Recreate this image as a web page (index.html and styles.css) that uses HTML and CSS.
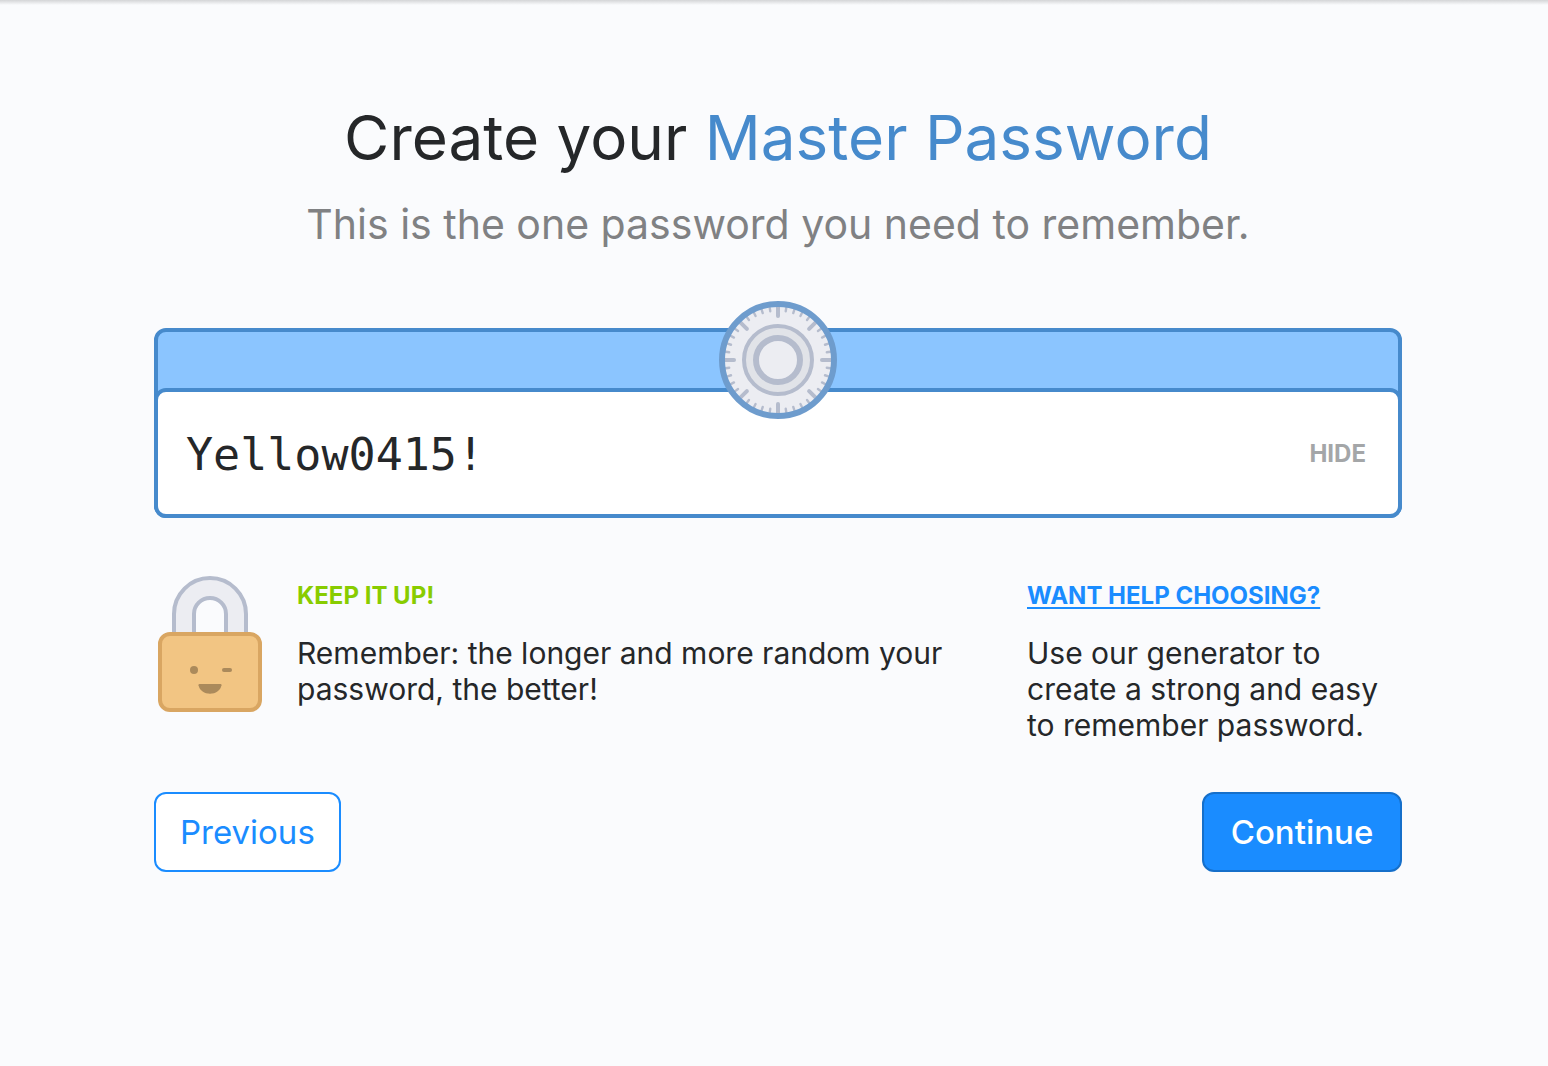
FILE: index.html
```html
<!DOCTYPE html>
<html lang="en">
<head>
<meta charset="utf-8">
<meta name="viewport" content="width=device-width, initial-scale=1">
<title>Create your Master Password</title>
<link rel="stylesheet" href="styles.css">
</head>
<body>
<main class="page">
  <header class="intro">
    <h1 class="title">Create your <span class="accent">Master Password</span></h1>
    <p class="subtitle">This is the one password you need to remember.</p>
  </header>

  <form class="form">
    <div class="vault">
      <div class="vault-bar">
        <svg class="dial" viewBox="0 0 118 118" aria-hidden="true">
          <defs>
            <g id="minor-ticks" stroke="#b5bccd" stroke-width="2.400" stroke-linecap="round">
              <path d="M59 6v3.600" transform="rotate(9 59 59)"/>
              <path d="M59 6v3.600" transform="rotate(18 59 59)"/>
              <path d="M59 6v3.600" transform="rotate(27 59 59)"/>
              <path d="M59 6v3.600" transform="rotate(36 59 59)"/>
            </g>
            <g id="eighth">
              <path d="M59 5v10" stroke="#b5bccd" stroke-width="4" stroke-linecap="round"/>
              <use href="#minor-ticks"/>
            </g>
          </defs>
          <circle cx="59" cy="59" r="56" fill="#ecedf2"/>
          <use href="#eighth"/>
          <use href="#eighth" transform="rotate(45 59 59)"/>
          <use href="#eighth" transform="rotate(90 59 59)"/>
          <use href="#eighth" transform="rotate(135 59 59)"/>
          <use href="#eighth" transform="rotate(180 59 59)"/>
          <use href="#eighth" transform="rotate(225 59 59)"/>
          <use href="#eighth" transform="rotate(270 59 59)"/>
          <use href="#eighth" transform="rotate(315 59 59)"/>
          <circle cx="59" cy="59" r="56" fill="none" stroke="#6e9ccd" stroke-width="6"/>
          <circle cx="59" cy="59" r="34" fill="#e1e3e8" stroke="#b5bccd" stroke-width="4"/>
          <circle cx="59" cy="59" r="22" fill="#ecedf2" stroke="#b5bccd" stroke-width="6"/>
        </svg>
      </div>
      <div class="field">
        <input class="password" type="text" value="Yellow0415!" aria-label="Master Password" autocomplete="off" spellcheck="false">
        <button class="toggle" type="button">HIDE</button>
      </div>
    </div>

    <div class="tips">
      <section class="strength">
        <svg class="lock" viewBox="0 0 104 136" aria-hidden="true">
          <path d="M16 58V38a36 36 0 0 1 72 0v20H68V38a16 16 0 0 0-32 0v20z" fill="#ecedf2" stroke="#b5bccd" stroke-width="4"/>
          <rect x="2" y="58" width="100" height="76" rx="10" fill="#f2c583" stroke="#d9a662" stroke-width="4"/>
          <circle cx="36" cy="94" r="4" fill="#ab8a5b"/>
          <rect x="64" y="92" width="10" height="4" rx="2" fill="#ab8a5b"/>
          <path d="M41.500 108h21q1.200 0 1 1.200c-1.200 5.500-6 8.500-11.500 8.500s-10.300-3-11.500-8.500q-.2-1.200 1-1.200z" fill="#ab8a5b"/>
        </svg>
        <div class="tip-text">
          <h2 class="tip-title good">KEEP IT UP!</h2>
          <p class="tip-body">Remember: the longer and more random your password, the better!</p>
        </div>
      </section>
      <section class="helper">
        <h2 class="tip-title"><a class="help-link" href="#generator">WANT HELP CHOOSING?</a></h2>
        <p class="tip-body">Use our generator to create a strong and easy to remember password.</p>
      </section>
    </div>

    <div class="actions">
      <button class="button secondary" type="button">Previous</button>
      <button class="button primary" type="submit">Continue</button>
    </div>
  </form>
</main>
</body>
</html>
```
FILE: styles.css
```css
* {
  box-sizing: border-box;
}

body {
  margin: 0;
  min-height: 100vh;
  background: #fafbfd linear-gradient(#d4d5d7, #fafbfd) no-repeat top / 100% 5px;
  color: #252729;
  font-family: Inter, "Liberation Sans", sans-serif;
}

h1, h2, p {
  margin: 0;
}

.page {
  padding: 98px 146px 48px 154px;
}

.intro {
  text-align: center;
}

.title {
  font-size: 62px;
  line-height: 80px;
  font-weight: 400;
}

.accent {
  color: #468acc;
}

.subtitle {
  margin-top: 18px;
  color: #808183;
  font-size: 41px;
  line-height: 56px;
}

.form {
  margin-top: 76px;
}

.vault {
  border: 4px solid #468acc;
  border-radius: 12px;
  background: #8bc5ff;
}

.vault-bar {
  position: relative;
  height: 56px;
}

.dial {
  position: absolute;
  top: 50%;
  left: 50%;
  width: 118px;
  height: 118px;
  transform: translate(-50%, -50%);
}

.field {
  display: flex;
  align-items: center;
  height: 130px;
  margin: 0 -4px -4px;
  padding: 2px 32px 0 28px;
  border: 4px solid #468acc;
  border-radius: 12px;
  background: #fff;
}

.password {
  flex: 1;
  min-width: 0;
  height: 80px;
  padding: 0;
  border: 0;
  outline: 0;
  background: transparent;
  color: #252729;
  font: 45px "DejaVu Sans Mono", monospace;
}

.toggle {
  padding: 0;
  border: 0;
  background: transparent;
  color: #a4a6a8;
  font: 700 24px/32px Inter, sans-serif;
}

.tips {
  display: flex;
  justify-content: space-between;
  gap: 48px;
  margin-top: 58px;
  padding-left: 4px;
}

.strength {
  display: flex;
  gap: 35px;
  flex: 0 1 800px;
}

.lock {
  flex: none;
  width: 104px;
  height: 136px;
}

.tip-text {
  flex: 1;
}

.helper {
  flex: 0 0 375px;
}

.tip-title {
  margin-top: 4px;
  font-size: 24px;
  line-height: 32px;
  font-weight: 700;
}

.good {
  color: #8c0;
}

.help-link {
  color: #1a8cff;
  text-underline-offset: 3px;
  text-decoration-thickness: 2px;
  text-decoration-skip-ink: none;
}

.tip-body {
  margin-top: 23px;
  font-size: 30px;
  line-height: 36px;
}

.actions {
  display: flex;
  justify-content: space-between;
  margin-top: 49px;
}

.button {
  height: 80px;
  padding: 0 24px;
  border: 2px solid #1a8cff;
  border-radius: 12px;
  font: 400 33px/40px Inter, sans-serif;
}

.secondary {
  background: #fff;
  color: #1a8cff;
}

.primary {
  min-width: 200px;
  border-color: #156fca;
  background: #1a8cff;
  color: #fff;
  font-weight: 500;
}
```
